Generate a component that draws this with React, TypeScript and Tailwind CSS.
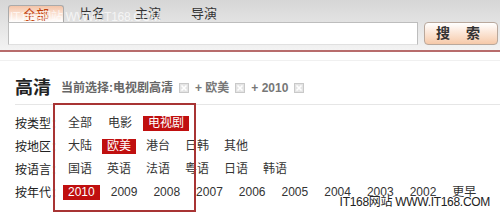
import React from 'react';

const font = { fontFamily: '"Liberation Sans", "Noto Sans CJK SC", sans-serif' };

type Row = { label: string; items: string[]; active: string; gap: string };

const rows: Row[] = [
  { label: '按类型', items: ['全部', '电影', '电视剧'], active: '电视剧', gap: 'gap-[6px]' },
  { label: '按地区', items: ['大陆', '欧美', '港台', '日韩', '其他'], active: '欧美', gap: 'gap-[5px]' },
  { label: '按语言', items: ['国语', '英语', '法语', '粤语', '日语', '韩语'], active: '', gap: 'gap-[5px]' },
  {
    label: '按年代',
    items: ['2010', '2009', '2008', '2007', '2006', '2005', '2004', '2003', '2002', '更早'],
    active: '2010',
    gap: 'gap-[6px]',
  },
];

function XBox() {
  return (
    <span className="mx-[6px] inline-flex size-[10px] items-center justify-center border border-[#c9c9c9] bg-[#e4e4e4]">
      <svg width="8" height="8" viewBox="0 0 8 8">
        <path d="M1.5 1.5 L6.5 6.5 M6.5 1.5 L1.5 6.5" stroke="#fff" strokeWidth="1.6" />
      </svg>
    </span>
  );
}

export default function App() {
  return (
    <div className="relative h-[215px] w-[500px] overflow-hidden bg-white text-[#333]" style={font}>
      <div className="h-[50px] bg-gradient-to-b from-[#d6d6d6] to-[#f3f3f3] pl-[8px] pt-[5px]">
        <div className="flex h-[17px] text-[13px] leading-[17px]">
          <div className="w-[56px] rounded-t-[3px] border border-b-0 border-[#aaaaaa] bg-gradient-to-b from-[#f4c4a8] to-white text-center text-[#c2410c]">
            全部
          </div>
          <div className="w-[56px] text-center">片名</div>
          <div className="w-[56px] text-center">主演</div>
          <div className="w-[56px] text-center">导演</div>
        </div>
        <div className="flex h-[23px] pr-[2px]">
          <div className="flex-1 border border-[#bdbdbd] border-b-[#e0e0e0] bg-white" />
          <button className="ml-[6px] w-[74px] rounded-[4px] border border-[#b9a89c] bg-gradient-to-b from-white to-[#f6c9a9] text-[14px] font-bold tracking-[6px] text-[#333]">
            搜 索
          </button>
        </div>
      </div>
      <div className="h-[2px] bg-[#b86c6c]" />
      <div className="mt-[8px] h-px bg-[#f0f0f0]" />

      <div className="pl-[15px]">
        <div className="mt-[17px] flex h-[20px] items-center">
          <span className="text-[18px] font-bold text-[#222]">高清</span>
          <span className="ml-[10px] text-[12px] font-bold text-[#666]">当前选择:电视剧高清</span>
          <XBox />
          <span className="text-[12px] font-bold text-[#777]">+ 欧美</span>
          <XBox />
          <span className="text-[12px] font-bold text-[#777]">+ 2010</span>
          <XBox />
        </div>
        <div className="mt-[6px] h-px bg-[#e6e6e6]" />
        <div className="mt-[7px]">
          {rows.map((row) => (
            <div key={row.label} className="flex h-[23px] items-center text-[12px]">
              <span className="w-[48px] shrink-0 whitespace-nowrap text-[#222]">{row.label}：</span>
              <div className={`flex whitespace-nowrap ${row.gap}`}>
                {row.items.map((item) => (
                  <span
                    key={item}
                    className={
                      item === row.active
                        ? 'bg-[#c00f0f] px-[5px] leading-[15px] text-white'
                        : 'px-[5px] leading-[15px] text-[#333]'
                    }
                  >
                    {item}
                  </span>
                ))}
              </div>
            </div>
          ))}
        </div>
      </div>

      <div className="absolute left-[53px] top-[103px] h-[109px] w-[143px] border-2 border-[#a83434]" />

      <div className="absolute left-[10px] top-[8px] whitespace-nowrap text-[12px] tracking-[-0.3px] text-white opacity-70">
        IT168网站 WWW.IT168.COM
      </div>
      <div
        className="absolute right-[10px] top-[194px] whitespace-nowrap text-[12px] leading-[16px] tracking-[-0.3px] text-[#222]"
        style={{ textShadow: '0 0 2px #fff, 0 0 2px #fff' }}
      >
        IT168网站 WWW.IT168.COM
      </div>
    </div>
  );
}
